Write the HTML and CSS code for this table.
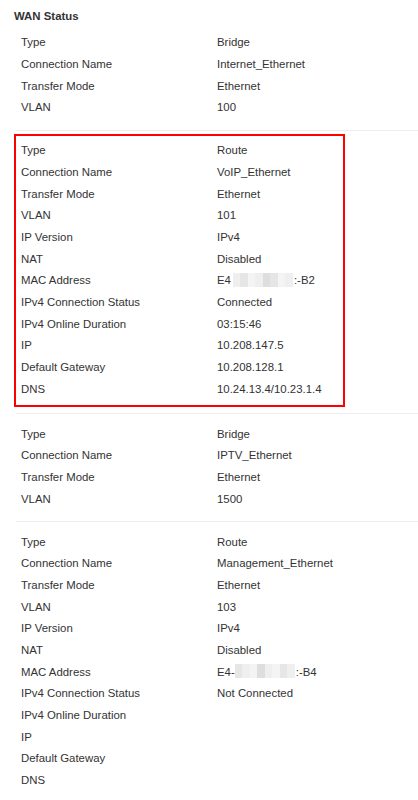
FILE: index.html
```html
<!DOCTYPE html>
<html lang="en">
<head>
<meta charset="utf-8">
<title>WAN Status</title>
<link rel="stylesheet" href="styles.css">
</head>
<body>
<div class="page">
  <h1 class="title">WAN Status</h1>

  <section class="group group-first">
    <div class="rows">
      <div class="row"><span class="k">Type</span><span class="v">Bridge</span></div>
      <div class="row"><span class="k">Connection Name</span><span class="v">Internet_Ethernet</span></div>
      <div class="row"><span class="k">Transfer Mode</span><span class="v">Ethernet</span></div>
      <div class="row"><span class="k">VLAN</span><span class="v">100</span></div>
    </div>
  </section>

  <section class="group group-marked">
    <div class="rows highlight">
      <div class="row"><span class="k">Type</span><span class="v">Route</span></div>
      <div class="row"><span class="k">Connection Name</span><span class="v">VoIP_Ethernet</span></div>
      <div class="row"><span class="k">Transfer Mode</span><span class="v">Ethernet</span></div>
      <div class="row"><span class="k">VLAN</span><span class="v">101</span></div>
      <div class="row"><span class="k">IP Version</span><span class="v">IPv4</span></div>
      <div class="row"><span class="k">NAT</span><span class="v">Disabled</span></div>
      <div class="row"><span class="k">MAC Address</span><span class="v">E4<span class="mosaic"><i class="m1"></i><i class="m2"></i><i class="m3"></i><i class="m1"></i><i class="m4"></i><i class="m2"></i><i class="m3"></i><i class="m1"></i></span>:-B2</span></div>
      <div class="row"><span class="k">IPv4 Connection Status</span><span class="v">Connected</span></div>
      <div class="row"><span class="k">IPv4 Online Duration</span><span class="v">03:15:46</span></div>
      <div class="row"><span class="k">IP</span><span class="v">10.208.147.5</span></div>
      <div class="row"><span class="k">Default Gateway</span><span class="v">10.208.128.1</span></div>
      <div class="row"><span class="k">DNS</span><span class="v">10.24.13.4/10.23.1.4</span></div>
    </div>
  </section>

  <section class="group">
    <div class="rows">
      <div class="row"><span class="k">Type</span><span class="v">Bridge</span></div>
      <div class="row"><span class="k">Connection Name</span><span class="v">IPTV_Ethernet</span></div>
      <div class="row"><span class="k">Transfer Mode</span><span class="v">Ethernet</span></div>
      <div class="row"><span class="k">VLAN</span><span class="v">1500</span></div>
    </div>
  </section>

  <section class="group">
    <div class="rows">
      <div class="row"><span class="k">Type</span><span class="v">Route</span></div>
      <div class="row"><span class="k">Connection Name</span><span class="v">Management_Ethernet</span></div>
      <div class="row"><span class="k">Transfer Mode</span><span class="v">Ethernet</span></div>
      <div class="row"><span class="k">VLAN</span><span class="v">103</span></div>
      <div class="row"><span class="k">IP Version</span><span class="v">IPv4</span></div>
      <div class="row"><span class="k">NAT</span><span class="v">Disabled</span></div>
      <div class="row"><span class="k">MAC Address</span><span class="v">E4-<span class="mosaic mosaic-b"><i class="m2"></i><i class="m1"></i><i class="m3"></i><i class="m4"></i><i class="m1"></i><i class="m3"></i><i class="m2"></i><i class="m1"></i></span>:-B4</span></div>
      <div class="row"><span class="k">IPv4 Connection Status</span><span class="v">Not Connected</span></div>
      <div class="row"><span class="k">IPv4 Online Duration</span><span class="v"></span></div>
      <div class="row"><span class="k">IP</span><span class="v"></span></div>
      <div class="row"><span class="k">Default Gateway</span><span class="v"></span></div>
      <div class="row"><span class="k">DNS</span><span class="v"></span></div>
    </div>
  </section>
</div>
</body>
</html>
```

FILE: styles.css
```css
* { box-sizing: border-box; }
html, body {
  margin: 0;
  padding: 0;
  background: #ffffff;
}
body {
  font-family: "Liberation Sans", Arial, sans-serif;
  font-size: 11.4px;
  color: #333333;
}
.page {
  padding: 6.2px 0 0 14px;
}
.title {
  margin: 0;
  font-size: 11.4px;
  font-weight: bold;
  line-height: 21.7px;
  color: #333333;
}
.group {
  margin-left: 2px;
  padding: 9.2px 0 11px 0;
  border-bottom: 1px solid #eeeeee;
}
.group-first {
  padding-top: 4.4px;
}
.group-marked {
  padding: 3px 0 6px 0;
}
.rows {
  display: flex;
  flex-direction: column;
}
.highlight {
  width: 331px;
  margin-left: -2px;
  border: 2px solid #ff0000;
  padding: 4.2px 0 5px 0;
}
.row {
  display: grid;
  grid-template-columns: 196px 1fr;
  height: 21.7px;
  line-height: 21.7px;
  padding-left: 5px;
  white-space: nowrap;
}
.k, .v {
  color: #333333;
}
.mosaic {
  display: inline-flex;
  vertical-align: middle;
  height: 14px;
  margin: -3px 1px 0 2px;
}
.mosaic-b {
  margin-left: 0;
}
.mosaic i {
  display: block;
  width: 7.5px;
  height: 14px;
}
.mosaic .m1 { background: #efefef; }
.mosaic .m2 { background: #e6e6e6; }
.mosaic .m3 { background: #f4f4f4; }
.mosaic .m4 { background: #dedede; }
```
